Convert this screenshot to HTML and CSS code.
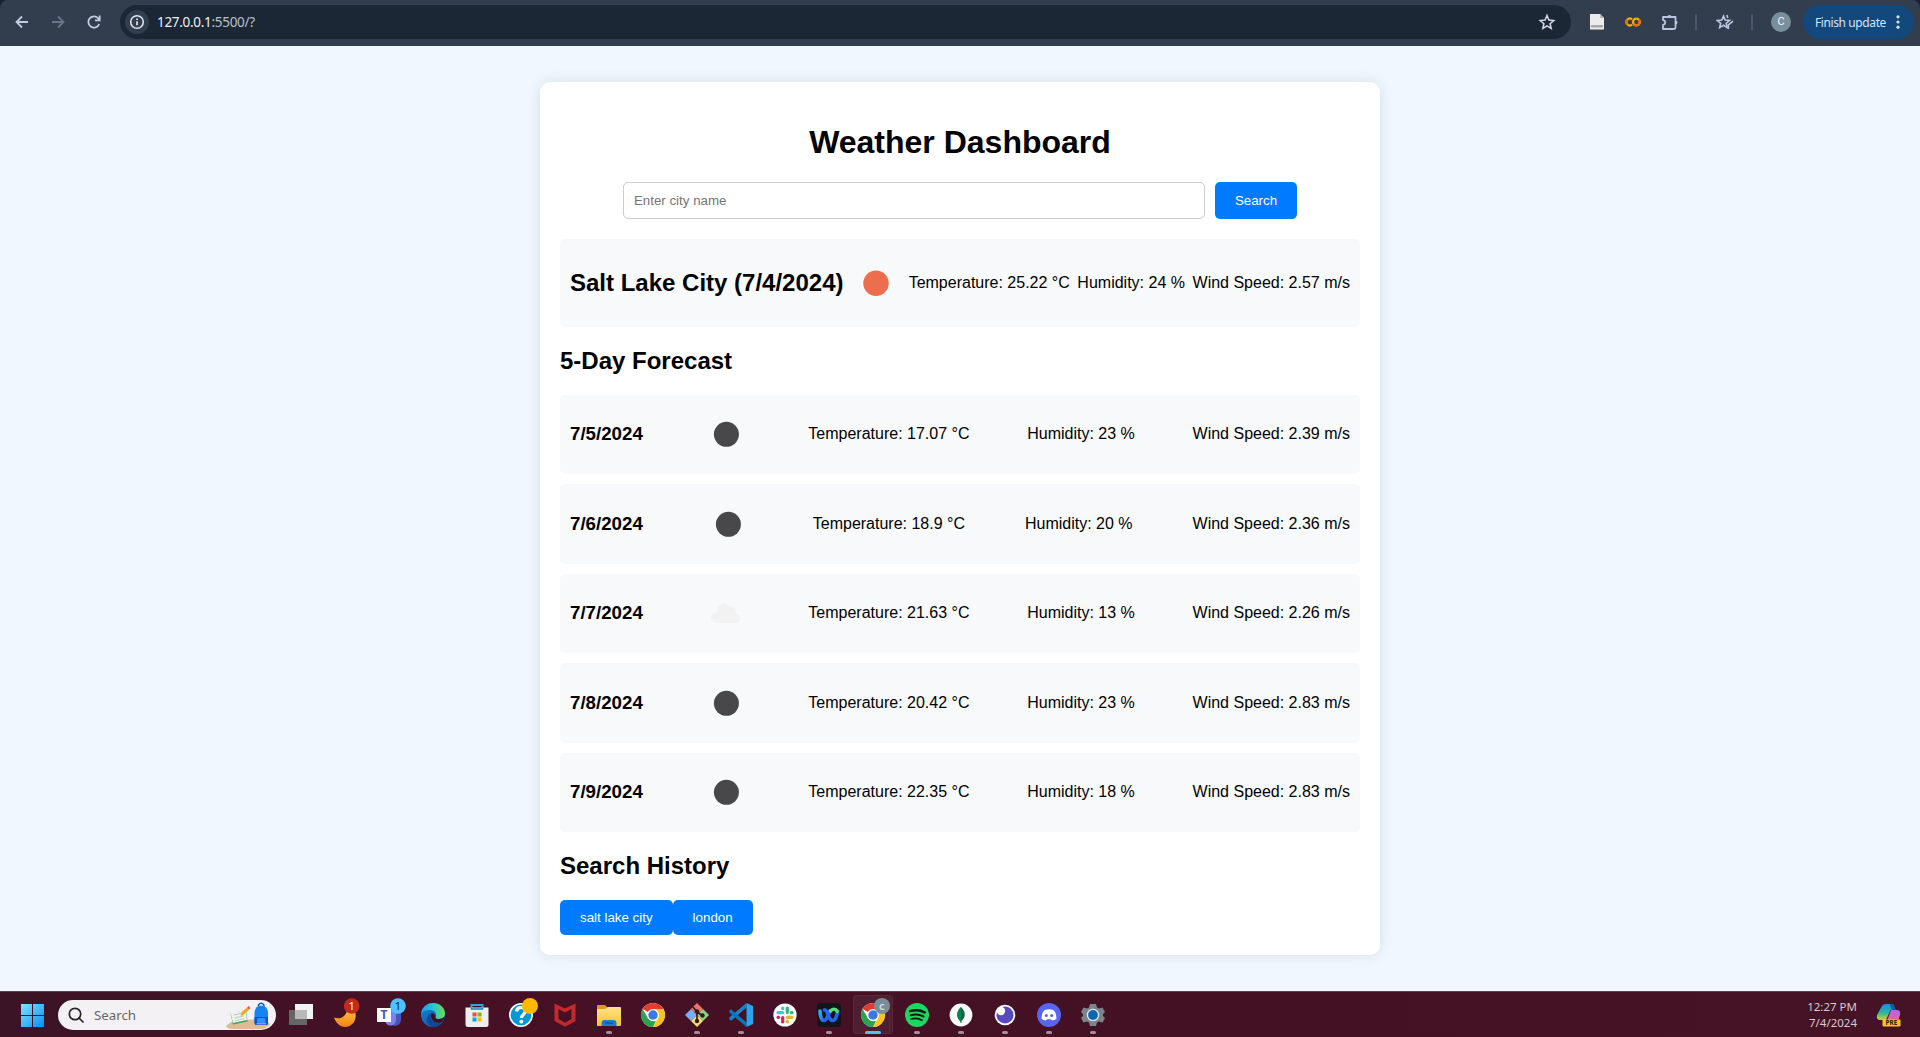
FILE: index.html
```html
<!DOCTYPE html>
<html lang="en">
<head>
<meta charset="utf-8">
<title>Weather Dashboard</title>
<link rel="stylesheet" href="styles.css">
</head>
<body>
<div class="toolbar-wrap">
<header class="toolbar">
  <span class="tool"><svg width="16" height="16" viewBox="0 0 16 16" class="line"><path d="M14 8H3M8 2.500 2.500 8 8 13.500"/></svg></span>
  <span class="tool dim"><svg width="16" height="16" viewBox="0 0 16 16" class="line"><path d="M2 8h11M8 2.500 13.500 8 8 13.500"/></svg></span>
  <span class="tool"><svg width="16" height="16" viewBox="0 0 16 16" class="line"><path d="M13.200 10A5.600 5.600 0 1 1 12.500 4.700L13.500 6M13.700 1.600V6.300H9"/></svg></span>
  <div class="omnibox">
    <span class="info"><svg width="16" height="16" viewBox="0 0 16 16"><circle cx="8" cy="8" r="6.300" fill="none" stroke="#dde2ec" stroke-width="1.600"/><path d="M8 7.200v4M8 4.400v1.500" stroke="#dde2ec" stroke-width="1.700"/></svg></span>
    <span class="url">127.0.0.1<span class="port">:5500/?</span></span>
    <svg class="bookmark" width="18" height="18" viewBox="0 0 18 18"><path d="M9 2.500l1.900 4.600 4.900.4-3.700 3.200 1.100 4.800L9 12.900l-4.200 2.600 1.100-4.800L2.200 7.500l4.900-.4z" fill="none" stroke="#d3d9e6" stroke-width="1.500"/></svg>
  </div>
  <span class="tool"><svg width="14" height="16" viewBox="0 0 14 16"><path d="M0 0h10l4 4v12H0z" fill="#ececec"/><path d="M10 0v4h4z" fill="#b9b9b9"/><path d="M1 11h12v2.500H1z" fill="#aaa"/><path d="M0 15h14v1H0z" fill="#999"/></svg></span>
  <span class="tool"><svg width="16" height="10" viewBox="0 0 16 10" fill="none" stroke-width="2.200"><path d="M7 2.400A3.400 3.400 0 1 0 7 7.600" stroke="#f9ab00"/><path d="M2.200 2.600a3.400 3.400 0 0 0 0 4.800" stroke="#e8710a"/><circle cx="11.400" cy="5" r="3.400" stroke="#f9ab00"/><path d="M9 7.400a3.400 3.400 0 0 0 4.800-4.800" stroke="#e8710a"/></svg></span>
  <span class="tool puzzle"><svg width="18" height="18" viewBox="0 0 18 18"><path d="M2 4h12.500v10.500a1.500 1.500 0 0 1-1.500 1.500H2v-4.200c3-.4 3-4.200 0-4.600z" fill="none" stroke="#b9c6df" stroke-width="1.800" stroke-linejoin="round"/><path d="M6.500 4a2 2 0 1 1 4 0M14.500 7.600a2 2 0 1 1 0 4" fill="#b9c6df"/></svg></span>
  <span class="divider"></span>
  <span class="tool star-tool"><svg width="18" height="18" viewBox="0 0 18 18" fill="none" stroke="#b9c6df" stroke-width="1.600"><path d="M7.500 3l1.600 4 4.500.4-3.400 2.900 1 4.300-3.700-2.300-3.900 2.300 1.100-4.300L1.200 7.400l4.600-.4z"/><path d="M10.800 2l1 3M12.600 15.800l-.4-3.600 4.800-4"/></svg></span>
  <span class="divider"></span>
  <span class="avatar">C</span>
  <div class="update"><span>Finish update</span><svg width="4" height="14" viewBox="0 0 4 14" fill="#d3e3fd"><circle cx="2" cy="1.800" r="1.600"/><circle cx="2" cy="7" r="1.600"/><circle cx="2" cy="12.200" r="1.600"/></svg></div>
</header>
</div>

<main class="page">
  <section class="container">
    <h1>Weather Dashboard</h1>
    <form class="search-form">
      <input class="city-input" type="text" placeholder="Enter city name">
      <button class="btn" type="button">Search</button>
    </form>
    <div class="weather-card">
      <h2>Salt Lake City (7/4/2024)</h2>
      <svg class="weather-icon" viewBox="0 0 50 50"><circle cx="25" cy="25.300" r="12.700" fill="#ec6e4c"/></svg>
      <p>Temperature: 25.22 °C</p><p>Humidity: 24 %</p><p>Wind Speed: 2.57 m/s</p>
    </div>
    <h2>5-Day Forecast</h2>
    <div class="weather-card">
      <h3>7/5/2024</h3>
      <svg class="weather-icon" viewBox="0 0 50 50"><circle cx="25.400" cy="25.300" r="12.500" fill="#48484a"/></svg>
      <p>Temperature: 17.07 °C</p><p>Humidity: 23 %</p><p>Wind Speed: 2.39 m/s</p>
    </div>
    <div class="weather-card">
      <h3>7/6/2024</h3>
      <svg class="weather-icon" viewBox="0 0 50 50"><circle cx="25.400" cy="25.300" r="12.500" fill="#48484a"/></svg>
      <p>Temperature: 18.9 °C</p><p>Humidity: 20 %</p><p>Wind Speed: 2.36 m/s</p>
    </div>
    <div class="weather-card">
      <h3>7/7/2024</h3>
      <svg class="weather-icon" viewBox="0 0 50 50"><path d="M15.500 35a5.400 5.400 0 0 1 0-10.900h.8a6.600 6.600 0 0 1 12-5.300 5.700 5.700 0 0 1 6.800 7.100 4.600 4.600 0 0 1 .4 9.100z" fill="#f2f2f2"/></svg>
      <p>Temperature: 21.63 °C</p><p>Humidity: 13 %</p><p>Wind Speed: 2.26 m/s</p>
    </div>
    <div class="weather-card">
      <h3>7/8/2024</h3>
      <svg class="weather-icon" viewBox="0 0 50 50"><circle cx="25.400" cy="25.300" r="12.500" fill="#48484a"/></svg>
      <p>Temperature: 20.42 °C</p><p>Humidity: 23 %</p><p>Wind Speed: 2.83 m/s</p>
    </div>
    <div class="weather-card">
      <h3>7/9/2024</h3>
      <svg class="weather-icon" viewBox="0 0 50 50"><circle cx="25.400" cy="25.300" r="12.500" fill="#48484a"/></svg>
      <p>Temperature: 22.35 °C</p><p>Humidity: 18 %</p><p>Wind Speed: 2.83 m/s</p>
    </div>
    <h2>Search History</h2>
    <div class="history"><button class="btn" type="button">salt lake city</button><button class="btn" type="button">london</button></div>
  </section>
</main>

<footer class="taskbar">
  <svg class="defs" width="0" height="0">
    <defs>
      <linearGradient id="win" gradientUnits="userSpaceOnUse" x1="0" y1="0" x2="24" y2="24"><stop offset="0" stop-color="#7deaff"/><stop offset="1" stop-color="#0b8cf5"/></linearGradient>
      <linearGradient id="moon" x1="0" y1="0" x2="0" y2="1"><stop offset="0" stop-color="#ffc83a"/><stop offset="1" stop-color="#f08019"/></linearGradient>
      <linearGradient id="edgeA" x1="0" y1="0" x2="1" y2="0"><stop offset="0" stop-color="#1d9de0"/><stop offset=".5" stop-color="#2cc3d6"/><stop offset="1" stop-color="#66e04a"/></linearGradient>
      <linearGradient id="edgeB" x1="0" y1="0" x2="1" y2="1"><stop offset="0" stop-color="#1685d8"/><stop offset="1" stop-color="#0b4fa0"/></linearGradient>
      <linearGradient id="folder" x1="0" y1="0" x2="0" y2="1"><stop offset="0" stop-color="#ffe08a"/><stop offset="1" stop-color="#ffc42e"/></linearGradient>
      <linearGradient id="webex" x1="0" y1="0" x2="1" y2="1"><stop offset="0" stop-color="#23b8ed"/><stop offset="1" stop-color="#2748e8"/></linearGradient>
      <linearGradient id="copA" x1="0" y1="0" x2="0" y2="1"><stop offset="0" stop-color="#1c8bea"/><stop offset=".55" stop-color="#28b79b"/><stop offset="1" stop-color="#d8d126"/></linearGradient>
      <linearGradient id="copB" x1="0" y1="0" x2="0" y2="1"><stop offset="0" stop-color="#b064f5"/><stop offset="1" stop-color="#f0657e"/></linearGradient>
      <g id="chrome">
        <circle cx="12" cy="12" r="12" fill="#fff"/>
        <path d="M12 12 1.600 6A12 12 0 0 1 22.400 6z" fill="#e33b2e"/>
        <path d="M12 6h10.400A12 12 0 0 1 12 24l5.200-9z" fill="#fcc31e"/>
        <path d="M1.600 6 6.800 15c1.600 2.500 5 4 8.300 2.600L12 24A12 12 0 0 1 1.600 6z" fill="#2ba24c"/>
        <circle cx="12" cy="12" r="6" fill="#fff"/><circle cx="12" cy="12" r="4.700" fill="#3b78e7"/>
      </g>
    </defs>
  </svg>
  <span class="app"><svg class="ico" viewBox="0 0 24 24" fill="url(#win)"><path d="M1 1h11v11H1zM13 1h11v11H13zM1 13h11v11H1zM13 13h11v11H13z"/></svg></span>
  <div class="search-pill">
    <svg width="16" height="16" viewBox="0 0 16 16" fill="none" stroke="#252525" stroke-width="1.700"><circle cx="7" cy="7" r="5.700"/><path d="M11 11l4 4" stroke-linecap="round"/></svg>
    <span>Search</span>
    <svg class="pill-art" width="46" height="28" viewBox="0 0 46 28">
      <path d="M0 25c5-4.500 9-6 16-6l20-1c4 1 7 3 8 5.500-2 2.500-6 4.500-10 4.500H7c-4 0-6-1-7-3z" fill="#dfba92"/>
      <path d="M4.500 12.500 7 23.500 21.500 20.500 20 9z" fill="#3aa35f"/><path d="M4.500 11.500l7-.8 8-2.200 1.500 10.500-14 3z" fill="#eef2ec"/><path d="M8 14l9-2M8.500 17l9-2M9 20l9-2.500" stroke="#b4bfba" stroke-width=".8"/><path d="M14.500 15l1-3.500L21 6.500l2 2-5.500 5.500z" fill="#f5a51b"/><path d="M21 6.500l1.800-1.500 1.700 2L23 8.500z" fill="#ec4f62"/>
      <path d="M32.500 6.500V4q2.700-3.500 5.400 0v2.500" fill="none" stroke="#0a58b0" stroke-width="1.400"/><path d="M28.500 11q1-6.500 6.700-6.500T42 11v11q0 2-2 2h-9.500q-2 0-2-2z" fill="#1384f2"/><path d="M28.500 16H42v6q0 2-2 2h-9.500q-2 0-2-2z" fill="#0b52c4"/><rect x="31" y="17" width="8.500" height="5" rx="1.500" fill="#2693ff"/><path d="M30.500 22h9.500v1.500h-9.500z" fill="#a98af5"/>
    </svg>
  </div>
  <span class="app"><svg class="ico" viewBox="0 0 24 24"><path d="M6 1h18v15H6z" fill="#f2f2f2"/><path d="M0 7h18v15H0z" fill="#666"/><path d="M6 7h12v9H6z" fill="#b8b8b8"/></svg></span>
  <span class="app"><svg class="ico" viewBox="0 0 24 24"><path d="M1 14.500c7 2.500 12-1 14-9h6c4 8 1 18-9 18.500C7 24 3 20 1 14.500z" fill="url(#moon)"/><circle cx="18.700" cy="3" r="7.800" fill="#c42b1c"/><text x="18.700" y="7" class="badge-text" fill="#fff">1</text></svg></span>
  <span class="app"><svg class="ico" viewBox="0 0 24 24"><path d="M12 9h12v8a6 6 0 0 1-8 5.500z" fill="#4b53bc"/><path d="M9 7h10v10a5.500 5.500 0 0 1-11 0z" fill="#7b83eb"/><path d="M0 5h14v14H0z" fill="#fff"/><text x="7" y="16.200" class="teams-text">T</text><circle cx="21" cy="3" r="7.800" fill="#4cc2ff"/><text x="21" y="7" class="badge-text" fill="#10222d">1</text></svg></span>
  <span class="app"><svg class="ico" viewBox="0 0 24 24"><circle cx="12" cy="12" r="12" fill="url(#edgeB)"/><path d="M0 11C1 4 6 0 12 0c7 0 12 5 12 10.500 0 3.500-3 5.500-6 5.500-3 0-4-1-3.500-2 1.500-2 0-7-5-7C5 7 1 8.500 0 11z" fill="url(#edgeA)"/><path d="M10 11c-2 5 3 10 10 8.200-2 3-5 4.800-8 4.800-4-1-7-5-6-9 .5-2 2-3.500 4-4z" fill="#0c4a96"/><path d="M10 10.500c2-1 5 1 4.500 3.500-.5 1.500 1 2 3.500 2 2 0 4-.7 5.300-2-.3 2-1.300 4-3 5.200-6 2-11.300-2.200-10.300-8.700z" fill="#41101f"/></svg></span>
  <span class="app"><svg class="ico" viewBox="0 0 24 24"><path d="M6.500 6V2h11v4" fill="none" stroke="#2aa8e0" stroke-width="2"/><path d="M.5 4.500h23v17q0 2.500-2.500 2.500H3Q.500 24 .5 21.500z" fill="#eee"/><path d="M6.500 4.500V6h11V4.500" fill="none" stroke="#1583b8" stroke-width="1.500"/><path d="M7.500 9.500h4v4h-4z" fill="#f25022"/><path d="M12.500 9.500h4v4h-4z" fill="#7fba00"/><path d="M7.500 14.500h4v4h-4z" fill="#00a4ef"/><path d="M12.500 14.500h4v4h-4z" fill="#ffb900"/></svg></span>
  <span class="app"><svg class="ico" viewBox="0 0 24 24"><circle cx="12" cy="12" r="11.200" fill="#0797d5" stroke="#fff" stroke-width="1.600"/><path d="M7.500 8.500q.5-4 4.500-4 4.300 0 4.300 3.700c0 3-3.800 3.300-3.800 6.800" fill="none" stroke="#fff" stroke-width="3.200"/><circle cx="12.300" cy="18.600" r="1.900" fill="#fff"/><circle cx="21" cy="3" r="8" fill="#ffb900"/></svg></span>
  <span class="app"><svg class="ico" viewBox="0 0 24 24"><path d="M1.500.500 12 5.500 22.500.500V18L12 23.800 1.500 18zM5.500 6v10l6.500 3.700L18.500 16V6L12 9.500z" fill="#c12b2c" fill-rule="evenodd"/></svg></span>
  <span class="app run"><svg class="ico" viewBox="0 0 24 24"><path d="M0 3q0-1 1-1h7l3 3v4H0z" fill="#dd9a12"/><path d="M0 6h8l3-2h12q1 0 1 1v17q0 1-1 1H0z" fill="url(#folder)"/><path d="M4.500 23v-3q0-3 3-3h9q3 0 3 3v3z" fill="#1581d0"/><path d="M8 20h8" stroke="#0d5795" stroke-width="1.500"/></svg></span>
  <span class="app"><svg class="ico" viewBox="0 0 24 24"><use href="#chrome"/></svg></span>
  <span class="app run"><svg class="ico" viewBox="0 0 24 24"><path d="M12 0l6 6-6 6-6-6z" fill="#ee756a"/><path d="M18 6l6 6-6 6-6-6z" fill="#8ed480"/><path d="M6 6l6 6-6 6-6-6z" fill="#79adf3"/><path d="M12 12l6 6-6 6-6-6z" fill="#f8df6b"/><path d="M8 4l4 5v10M12 9l6 4" fill="none" stroke="#35191f" stroke-width="1.700"/><g fill="#35191f"><circle cx="12" cy="8.500" r="2.200"/><circle cx="12" cy="18" r="2.200"/><circle cx="17.500" cy="12.500" r="2.200"/></g></svg></span>
  <span class="app run"><svg class="ico" viewBox="0 0 24 24"><path d="M17.500 4.500 2 17.800.300 16.200v-1.600L17.500 0z" fill="#1686cc"/><path d="M.3 7.800 2 6.200l15.500 13.300V24L.300 9.400z" fill="#0876bb"/><path d="M17.500 0 24 3v18l-6.500 3z" fill="#27a5ef"/></svg></span>
  <span class="app"><svg class="ico" viewBox="0 0 24 24"><circle cx="12" cy="12" r="11.600" fill="#fff"/><g fill="none" stroke-width="3.200" stroke-linecap="round"><path d="M5 9.700h4.500M9.700 5v.6" stroke="#36c5f0"/><path d="M14.300 5v4.500M19 9.700h-.6" stroke="#2eb67d"/><path d="M19 14.300h-4.500M14.300 19v-.6" stroke="#ecb22e"/><path d="M9.700 19v-4.500M5 14.300h.6" stroke="#e01e5a"/></g></svg></span>
  <span class="app run"><svg class="ico" viewBox="0 0 24 24"><rect width="24" height="24" rx="4" fill="#111719"/><path d="M3 8c0 6 2 10 4.500 9.500S11 12 13 8" fill="none" stroke="url(#webex)" stroke-width="3.600" stroke-linecap="round"/><path d="M7.500 7C11 6 11 17.500 15.500 17.500c3 0 4.500-5 5-9.500" fill="none" stroke="#2864f4" stroke-width="3.600" stroke-linecap="round"/><path d="M13.500 8q4-4 6.800.500" fill="none" stroke="#58df75" stroke-width="3.200" stroke-linecap="round"/></svg></span>
  <span class="app active"><svg class="ico" viewBox="0 0 24 24"><use href="#chrome"/><circle cx="21" cy="3" r="8" fill="#788f9b"/><text x="21" y="6.500" class="profile-text">C</text></svg></span>
  <span class="app run"><svg class="ico" viewBox="0 0 24 24"><circle cx="12" cy="12" r="12" fill="#1ed760"/><g fill="none" stroke="#12170f" stroke-linecap="round"><path d="M5 8.200Q13 5.700 19.800 9.500" stroke-width="2.400"/><path d="M5.700 12.300Q12.500 10.300 18.500 13.500" stroke-width="2"/><path d="M6.200 16Q12 14.300 17 17.200" stroke-width="1.700"/></g></svg></span>
  <span class="app run"><svg class="ico" viewBox="0 0 24 24"><circle cx="12" cy="12" r="11.400" fill="#fafafa"/><path d="M12 4c5 5 5 10 .5 14v2h-1v-2C7 14 7 9 12 4z" fill="#136149"/><path d="M12 4v15C7 15 7 9 12 4z" fill="#0b8250"/></svg></span>
  <span class="app run"><svg class="ico" viewBox="0 0 24 24"><circle cx="12" cy="12" r="10.300" fill="#fff"/><circle cx="12" cy="12" r="8.500" fill="#5849be"/><circle cx="8" cy="8" r="4.200" fill="#fff"/></svg></span>
  <span class="app run"><svg class="ico" viewBox="0 0 24 24"><circle cx="12" cy="12" r="12" fill="#5865f2"/><path d="M8.500 6.800q3.500-1 7 0 3.500 1 4 9-2 1.800-4.500 1.700l-1-1.300h-4L9 17.500q-2.500.1-4.500-1.700.500-8 4-9z" fill="#fff"/><circle cx="9.300" cy="12.500" r="1.500" fill="#5865f2"/><circle cx="14.700" cy="12.500" r="1.500" fill="#5865f2"/></svg></span>
  <span class="app run"><svg class="ico" viewBox="0 0 24 24"><path d="M9 1h6l1 3.500 2 1 3.500-1 2.500 4.500-2 2v2l2 2-2.500 4.500-3.500-1-2 1-1 3.500H9l-1-3.500-2-1-3.500 1L0 15l2-2v-2L0 9l2.500-4.500 3.500 1 2-1z" fill="#7c858c"/><circle cx="12" cy="12" r="6.200" fill="#e6e9eb"/><circle cx="12" cy="12" r="4.900" fill="#0d66b7"/></svg></span>
  <div class="clock"><span>12:27 PM</span><span>7/4/2024</span></div>
  <svg class="ico copilot" viewBox="0 0 24 24"><path d="M5 3Q6 1 9 1h5q3 0 3.500 3l1 3h-5L9 17H3q-4 0-3-5z" fill="url(#copA)"/><path d="M13 1q4 0 4.500 3l1 3h-4z" fill="#1456ad"/><path d="M14 7h6q4 0 3 5l-2 6H10z" fill="url(#copB)"/><rect x="5.500" y="16.500" width="18" height="7" rx="1" fill="#ffc20e"/><text x="14.500" y="22.400" class="pre-text">PRE</text></svg>
</footer>
</body>
</html>
```
FILE: styles.css
```css
body {
  margin: 0;
  height: 1037px;
  display: flex;
  flex-direction: column;
  overflow: hidden;
  font-family: Arial, "Liberation Sans", sans-serif;
  background: #f0f7ff;
}

/* Browser toolbar */
.toolbar-wrap { background: #17202d; }
.toolbar {
  box-sizing: border-box;
  height: 46px;
  padding: 0 6px 2px 4px;
  display: flex;
  align-items: center;
  background: #323d4d;
  border-radius: 8px 8px 0 0;
  font-family: "Noto Sans", sans-serif;
}
.tool {
  width: 36px;
  display: flex;
  justify-content: center;
}
.line { fill: none; stroke: #c3cce0; stroke-width: 1.8; }
.dim { opacity: .4; }
.omnibox {
  box-sizing: border-box;
  flex: 1;
  height: 34px;
  margin: 0 8px;
  padding: 0 15px 0 5px;
  display: flex;
  align-items: center;
  border-radius: 17px;
  background: #1c2736;
}
.info {
  width: 24px;
  height: 24px;
  display: flex;
  align-items: center;
  justify-content: center;
  border-radius: 50%;
  background: #323d4d;
}
.url { margin-left: 8px; font-size: 13.5px; letter-spacing: -.3px; color: #eef1f7; }
.port { color: #b9c0cb; }
.bookmark { margin-left: auto; }
.puzzle { width: 37px; }
.divider { width: 2px; height: 16px; margin-left: 7px; background: #4a566b; }
.star-tool { margin: 0 1px 0 10px; }
.avatar {
  width: 20px;
  height: 20px;
  margin: 0 12px 0 18px;
  border-radius: 50%;
  background: #78909c;
  color: #f2f5f6;
  font: 11px/20px Roboto, sans-serif;
  text-align: center;
}
.update {
  box-sizing: border-box;
  width: 111px;
  height: 34px;
  padding: 0 14px 0 12px;
  display: flex;
  align-items: center;
  justify-content: space-between;
  border-radius: 17px;
  background: #13487c;
  color: #d3e3fd;
  font-size: 12px;
  letter-spacing: -.4px;
  white-space: nowrap;
}

/* Weather dashboard */
.page {
  flex: 1;
  display: flex;
  align-items: center;
  justify-content: center;
}
.container {
  width: 800px;
  padding: 20px;
  border-radius: 10px;
  background: #fff;
  box-shadow: 0 0 15px rgba(0, 0, 0, .1);
}
h1 { margin: 21.44px 0; font-size: 32px; line-height: 37px; text-align: center; }
h2 { margin: 19.92px 0; font-size: 24px; line-height: 28px; }
h3 { margin: 18.72px 0; font-size: 18.72px; line-height: 22px; }
p { margin: 16px 0; font-size: 16px; line-height: 18px; }
.search-form { display: flex; justify-content: center; gap: 10px; margin-bottom: 20px; }
.city-input {
  width: 560px;
  height: 15px;
  padding: 10px;
  border: 1px solid #ccc;
  border-radius: 5px;
  font: 13.333px Arial, "Liberation Sans", sans-serif;
}
.btn {
  padding: 10px 20px;
  border: 0;
  border-radius: 5px;
  background: #007bff;
  color: #fff;
  font: 13.333px/15px Arial, "Liberation Sans", sans-serif;
}
.weather-card {
  display: flex;
  align-items: center;
  justify-content: space-between;
  margin-bottom: 10px;
  padding: 10px;
  border-radius: 5px;
  background: #f8f9fb;
}
.weather-icon { width: 50px; height: 50px; flex: none; }
.history { display: flex; }

/* Windows taskbar */
.taskbar {
  box-sizing: border-box;
  height: 46px;
  padding: 1px 19px 0 10px;
  display: flex;
  border-top: 1px solid #67404c;
  background: linear-gradient(90deg, #3b1425 0, #471025 25%, #441124 60%, #461226 100%);
  font-family: "Noto Sans", sans-serif;
}
.defs { position: absolute; }
.app {
  position: relative;
  width: 44px;
  display: flex;
  align-items: center;
  justify-content: center;
}
.ico { width: 24px; height: 24px; overflow: visible; }
.search-pill {
  box-sizing: border-box;
  width: 218px;
  height: 30px;
  margin: 7px 3px 0 4px;
  padding: 0 4px 0 10px;
  display: flex;
  align-items: center;
  border-radius: 15px;
  background: #f3f1f3;
  color: #666;
  font-size: 13.3px;
}
.search-pill span { margin-left: 10px; }
.pill-art { margin-left: auto; }
.run::after, .active::after {
  content: "";
  position: absolute;
  bottom: 3px;
  left: 19px;
  width: 6px;
  height: 3px;
  border-radius: 2px;
  background: #a58e98;
}
.active::before {
  content: "";
  box-sizing: border-box;
  position: absolute;
  left: 2px;
  top: 2px;
  width: 40px;
  height: 39px;
  border: 1px solid #59293a;
  border-right: 4px double #59293a;
  border-radius: 4px;
  background: #4f1e31;
}
.active .ico { position: relative; }
.active::after { left: 14px; width: 16px; background: #4cc2ff; }
.badge-text { font-size: 11px; text-anchor: middle; }
.teams-text { font-size: 12px; font-weight: 700; text-anchor: middle; fill: #4b53bc; }
.profile-text { font-size: 9px; font-weight: 700; text-anchor: middle; fill: #d5dde1; }
.clock {
  margin-left: auto;
  padding-top: 6px;
  display: flex;
  flex-direction: column;
  align-items: flex-end;
  color: #d8c9cf;
  font-size: 11.5px;
  line-height: 16px;
}
.copilot { margin: 10px 0 0 20px; }
.pre-text { font: 700 6.5px "Noto Sans", sans-serif; text-anchor: middle; fill: #241a05; }
```
